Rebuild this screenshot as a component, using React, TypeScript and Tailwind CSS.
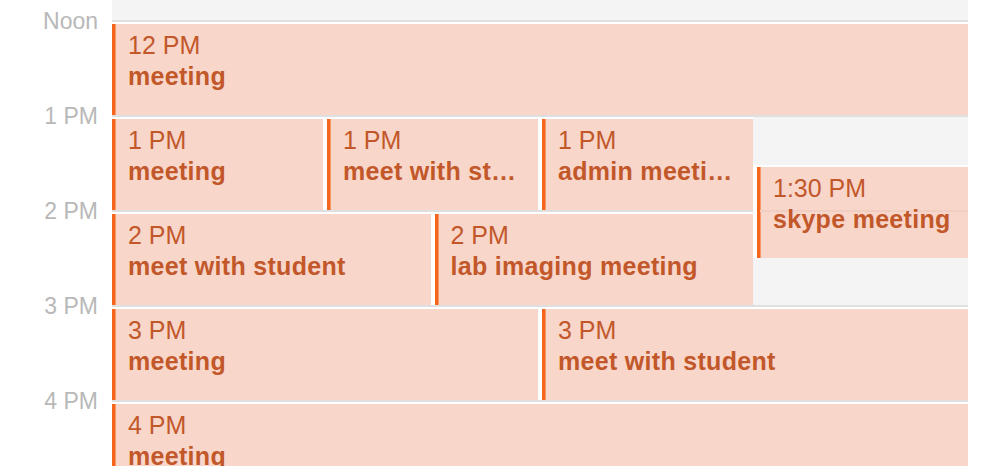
const HOUR = 95
const TOP = 20
const DAY_W = 856

type CalEvent = {
  time: string
  title: string
  start: number
  dur: number
  left: number
  width: number
}

const events: CalEvent[] = [
  { time: '12 PM', title: 'meeting', start: 12, dur: 1, left: 0, width: 856 },
  { time: '1 PM', title: 'meeting', start: 13, dur: 1, left: 0, width: 211 },
  { time: '1 PM', title: 'meet with student', start: 13, dur: 1, left: 215, width: 211 },
  { time: '1 PM', title: 'admin meeting', start: 13, dur: 1, left: 430, width: 211 },
  { time: '1:30 PM', title: 'skype meeting', start: 13.5, dur: 1, left: 645, width: 211 },
  { time: '2 PM', title: 'meet with student', start: 14, dur: 1, left: 0, width: 318.5 },
  { time: '2 PM', title: 'lab imaging meeting', start: 14, dur: 1, left: 322.5, width: 318.5 },
  { time: '3 PM', title: 'meeting', start: 15, dur: 1, left: 0, width: 426 },
  { time: '3 PM', title: 'meet with student', start: 15, dur: 1, left: 430, width: 426 },
  { time: '4 PM', title: 'meeting', start: 16, dur: 1, left: 0, width: 856 }
]

const labels = ['Noon', '1 PM', '2 PM', '3 PM', '4 PM']

function EventBlock({ ev }: { ev: CalEvent }) {
  const lineY = TOP + (ev.start - 12) * HOUR
  const gap = ev.left > 0
  // hour lines that fall inside the event show through faintly
  const inner: number[] = []
  for (let h = Math.floor(ev.start) + 1; h < ev.start + ev.dur; h++) {
    inner.push((h - ev.start) * HOUR - 4)
  }

  return (
    <div
      className={`absolute border-t-2 border-white ${gap ? 'border-l-4' : ''}`}
      style={{
        top: lineY + 2,
        left: gap ? ev.left - 4 : ev.left,
        width: gap ? ev.width + 4 : ev.width,
        height: ev.dur * HOUR - 2
      }}
    >
      <div className="relative h-full overflow-hidden border-l-[3px] border-[#f5661c] bg-[#f8d6ca] pt-[6px] pr-[15px] pl-[13px] text-[25px] leading-[31px] text-[#c2582a] shadow-[inset_1px_0_0_#f79868]">
        {inner.map((y) => (
          <div key={y} className="absolute right-0 left-0 h-[2px] bg-[#f0cec2]" style={{ top: y }} />
        ))}
        <div className="relative truncate">{ev.time}</div>
        <div className="relative truncate font-bold tracking-[0.3px]">{ev.title}</div>
      </div>
    </div>
  )
}

export default function App() {
  return (
    <div
      className="flex h-[466px] w-[982px] overflow-hidden bg-white"
      style={{ fontFamily: '"Liberation Sans", Arial, sans-serif' }}
    >
      <div className="flex w-[112px] shrink-0 flex-col pt-[8px] pr-[14px] text-right text-[23px] leading-[26px] text-[#b8b8b8]">
        {labels.map((l) => (
          <div key={l} className="h-[95px] shrink-0">
            {l}
          </div>
        ))}
      </div>

      <div className="relative h-full shrink-0 bg-[#f4f4f4]" style={{ width: DAY_W }}>
        <div className="flex flex-col pt-[20px]">
          {labels.map((l) => (
            <div key={l} className="h-[95px] shrink-0 border-t-2 border-[#dfdfdf]" />
          ))}
        </div>
        {events.map((ev, i) => (
          <EventBlock key={i} ev={ev} />
        ))}
      </div>
    </div>
  )
}
